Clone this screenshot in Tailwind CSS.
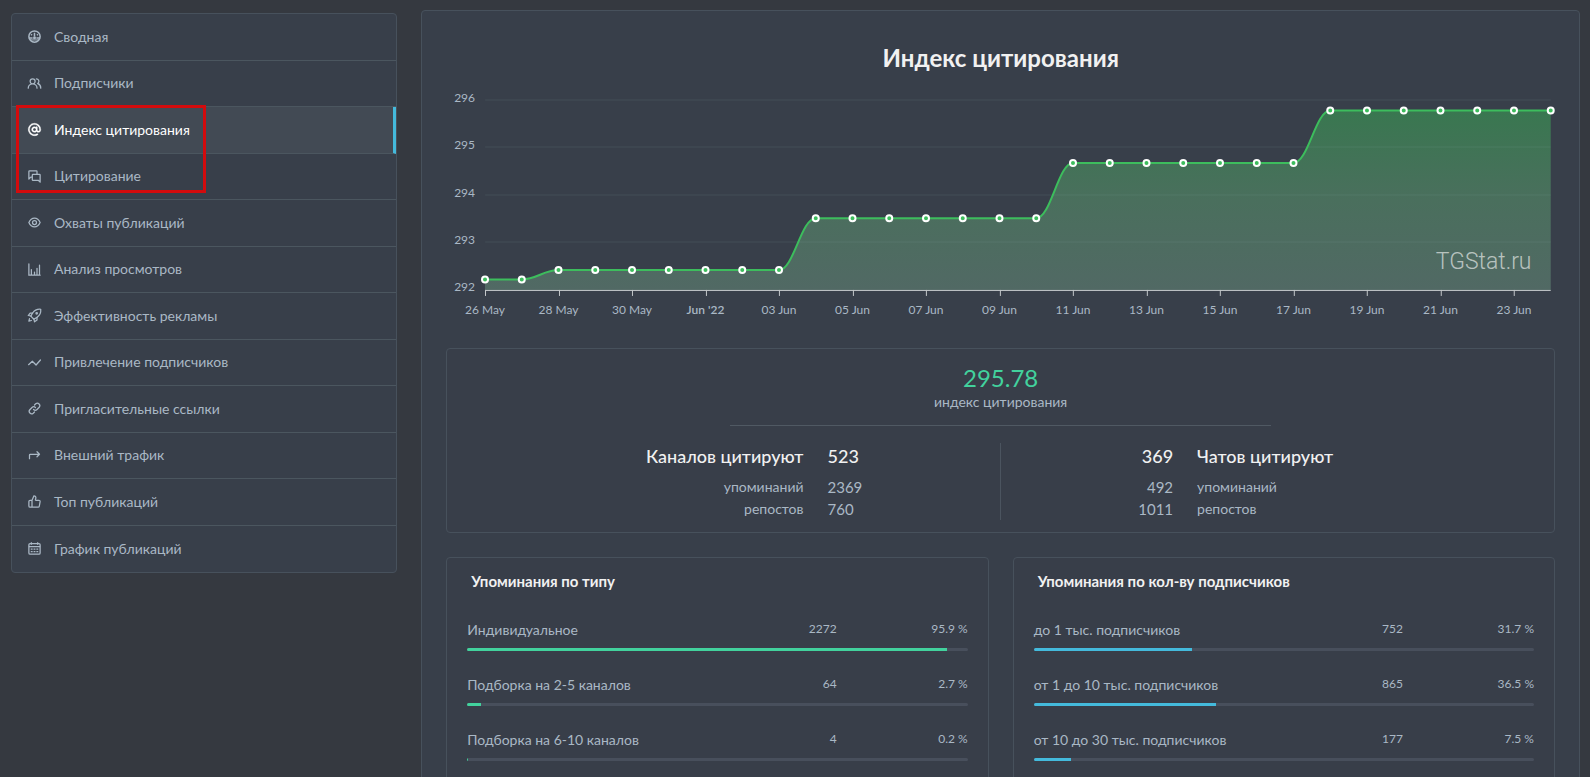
<!DOCTYPE html>
<html lang="ru">
<head>
<meta charset="utf-8">
<meta name="viewport" content="width=device-width, initial-scale=1">
<title>Индекс цитирования</title>
<script src="https://cdn.jsdelivr.net/npm/@tailwindcss/browser@4"></script>
</head>
<body class="min-h-screen bg-[#353940] font-['Lato','Open_Sans',sans-serif] text-sm text-[#aab8c5]">
<div class="grid grid-cols-[1fr_3fr] items-start gap-6 pt-[10px] pr-[10px] pl-[11px]">

  <div class="relative mt-[3px]">
  <nav class="grid min-h-[560px] auto-rows-fr divide-y divide-[#4b565f] rounded border border-[#47515c] bg-[#383f4a]" aria-label="Статистика">
    <a href="#" class="flex items-center gap-3 px-[15px]"><svg class="size-[15px]" viewBox="0 0 24 24" fill="none" stroke="currentColor" stroke-width="2.400"><circle cx="12" cy="12" r="9"/><path d="M3 14.500h6M15 14.500h6M12 6v6M6.500 8.500l1.500 1.500M17.500 8.500 16 10"/><path d="M5 17.500h14" stroke-width="1.600"/><circle cx="12" cy="14" r="2.400" fill="currentColor" stroke="none"/></svg>Сводная</a>
    <a href="#" class="flex items-center gap-3 px-[15px]"><svg class="size-[15px]" viewBox="0 0 24 24" fill="currentColor"><path d="M12.300 12.220A4.920 4.920 0 0 0 14 8.500a5 5 0 0 0-10 0 4.920 4.920 0 0 0 1.700 3.720A8 8 0 0 0 1 19.500a1 1 0 0 0 2 0 6 6 0 0 1 12 0 1 1 0 0 0 2 0 8 8 0 0 0-4.700-7.280ZM9 11.500a3 3 0 1 1 3-3 3 3 0 0 1-3 3Zm9.740.320A5 5 0 0 0 15 3.500a1 1 0 0 0 0 2 3 3 0 0 1 3 3 3 3 0 0 1-1.500 2.590 1 1 0 0 0-.5.840 1 1 0 0 0 .450.860l.390.260.130.070a7 7 0 0 1 4 6.380 1 1 0 0 0 2 0 9 9 0 0 0-4.230-8.180Z"/></svg>Подписчики</a>
    <a href="#" aria-current="page" class="flex items-center gap-3 border-r-[3px] border-r-[#44badc] bg-[#424a54] px-[15px] text-white"><svg class="size-[15px]" viewBox="0 0 24 24" fill="currentColor" stroke="currentColor" stroke-width=".6"><path d="M12 2a10 10 0 1 0 5 18.660 1 1 0 1 0-1-1.730A8 8 0 1 1 20 12v.750a1.750 1.750 0 0 1-3.500 0V8.500a1 1 0 0 0-2-.210A4.450 4.450 0 0 0 12 7.500a4.500 4.500 0 1 0 3.300 7.500A3.740 3.740 0 0 0 22 12.750V12A10 10 0 0 0 12 2Zm0 12.500a2.500 2.500 0 1 1 2.500-2.500 2.500 2.500 0 0 1-2.500 2.500Z"/></svg>Индекс цитирования</a>
    <a href="#" class="flex items-center gap-3 px-[15px]"><svg class="size-[15px]" viewBox="0 0 24 24" fill="none" stroke="currentColor" stroke-width="2" stroke-linejoin="round"><path d="M8.500 13H6l-3 3V4a1 1 0 0 1 1-1h11a1 1 0 0 1 1 1v4"/><path d="M9.500 8.500H20a1 1 0 0 1 1 1V21l-3-3H9.500a1 1 0 0 1-1-1V9.500a1 1 0 0 1 1-1Z"/></svg>Цитирование</a>
    <a href="#" class="flex items-center gap-3 px-[15px]"><svg class="size-[15px]" viewBox="0 0 24 24" fill="none" stroke="currentColor" stroke-width="2"><path d="M3 12c2-4.600 5.200-7 9-7s7 2.400 9 7c-2 4.600-5.200 7-9 7s-7-2.400-9-7Z"/><circle cx="12" cy="12" r="3.200"/></svg>Охваты публикаций</a>
    <a href="#" class="flex items-center gap-3 px-[15px]"><svg class="size-[15px]" viewBox="0 0 24 24" fill="none" stroke="currentColor" stroke-width="2" stroke-linecap="round"><path d="M3 3v18h18M7 20v-8M12 20v-4M16 20V10M20 20V5"/></svg>Анализ просмотров</a>
    <a href="#" class="flex items-center gap-3 px-[15px]"><svg class="size-[15px]" viewBox="0 0 24 24" fill="none" stroke="currentColor" stroke-width="2" stroke-linejoin="round" stroke-linecap="round"><path d="M22 2c-6-.5-10 1.500-13 6l-3 5 5 5 5-3c4.500-3 6.500-7 6-13Z"/><path d="M9 8 5 8l-3 4 5 1M16 15v4l-4 3-1-5M4 17l-1 4 4-1"/><circle cx="15.500" cy="8.500" r="1.200"/></svg>Эффективность рекламы</a>
    <a href="#" class="flex items-center gap-3 px-[15px]"><svg class="size-[15px]" viewBox="0 0 24 24" fill="none" stroke="currentColor" stroke-width="2" stroke-linejoin="round" stroke-linecap="round"><path d="m2.500 15.500 6-5.500 6 6 7-8"/></svg>Привлечение подписчиков</a>
    <a href="#" class="flex items-center gap-3 px-[15px]"><svg class="size-[15px]" viewBox="0 0 24 24" fill="none" stroke="currentColor" stroke-width="2" stroke-linecap="round"><path d="m12 17.500-2 2a3.900 3.900 0 0 1-5.500-5.500l3.500-3.500a3.900 3.900 0 0 1 5.500 0M12 6.500l2-2a3.900 3.900 0 0 1 5.500 5.500L16 13.500a3.900 3.900 0 0 1-5.500 0"/></svg>Пригласительные ссылки</a>
    <a href="#" class="flex items-center gap-3 px-[15px]"><svg class="size-[15px]" viewBox="0 0 24 24" fill="none" stroke="currentColor" stroke-width="2" stroke-linejoin="round" stroke-linecap="round"><path d="M4 17v-6a1 1 0 0 1 1-1h15M16 6l4 4-4 4"/></svg>Внешний трафик</a>
    <a href="#" class="flex items-center gap-3 px-[15px]"><svg class="size-[15px]" viewBox="0 0 24 24" fill="currentColor"><path d="M21.300 10.080A3 3 0 0 0 19 9h-4.560L15 7.570A4.130 4.130 0 0 0 11.110 2a1 1 0 0 0-.910.590L7.350 9H5a3 3 0 0 0-3 3v7a3 3 0 0 0 3 3h12.730a3 3 0 0 0 2.950-2.460l1.270-7a3 3 0 0 0-.650-2.460ZM7 20H5a1 1 0 0 1-1-1v-7a1 1 0 0 1 1-1h2Zm13-7.820-1.270 7a1 1 0 0 1-1 .820H9v-9.790l2.720-6.120a2.110 2.110 0 0 1 1.380 2.780l-.530 1.430A2 2 0 0 0 14.440 11H19a1 1 0 0 1 1 1.180Z"/></svg>Топ публикаций</a>
    <a href="#" class="flex items-center gap-3 px-[15px]"><svg class="size-[15px]" viewBox="0 0 24 24" fill="none" stroke="currentColor" stroke-width="2"><rect x="3" y="4" width="18" height="17" rx="2"/><path d="M3 9h18M7 2v4M17 2v4M6 13h3M10.500 13h3M15 13h3M6 17h3M10.500 17h3M15 17h3"/></svg>График публикаций</a>
  </nav>
  <div class="pointer-events-none absolute top-[92px] left-[5px] h-[88px] w-[190px] border-[3px] border-[#d30b0d]"></div>
  </div>

  <main class="rounded border border-[#47515c] bg-[#383f4a] px-6 pt-[29px] pb-12">
    <h1 class="text-center text-2xl leading-9 font-bold text-[#f1f1f1]">Индекс цитирования</h1>
    <svg id="chart" class="mt-3 block h-auto w-full overflow-visible" viewBox="0 0 1109 241" role="img" aria-label="Индекс цитирования по дням">
      <defs><linearGradient id="fill" x1="0" y1="0" x2="0" y2="1"><stop offset="0" stop-color="#397750"/><stop offset=".5" stop-color="#4a6f5d"/><stop offset="1" stop-color="#516964"/></linearGradient></defs>
      <path id="area" fill="url(#fill)"/>
      <g id="grid" stroke="#a0b4be" stroke-opacity=".06" stroke-width="2"></g>
      <g id="axis" stroke="#c4c8cb"></g>
      <g id="labels" class="fill-[#aab8c5] text-xs"></g>
      <path id="line" fill="none" stroke="#3dbd5d" stroke-width="2"/>
      <g id="dots" fill="#3dbd5d" stroke="#fff" stroke-width="2"></g>
      <text x="990" y="181" class="fill-white/60 font-['Roboto',sans-serif] text-[23px] font-light">TGStat.ru</text>
    </svg>

    <section class="mt-[19px] rounded border border-[#47515c] bg-[#383e49] px-3 pt-[15px] pb-3">
      <p class="text-center text-2xl leading-7 text-[#42d29d]">295.78</p>
      <p class="text-center leading-[19px]">индекс цитирования</p>
      <hr class="mx-auto mt-[14px] w-1/2 border-[#505963]">
      <div class="mt-[17px] grid grid-cols-2">
        <dl class="grid grid-cols-[2fr_1fr] gap-x-6 border-r border-[#4b545f] leading-[22px]">
          <dt class="pb-[6px] text-right text-lg leading-[27px] font-medium text-[#f1f1f1]">Каналов цитируют</dt><dd class="text-lg leading-[27px] font-medium text-[#f1f1f1]">523</dd>
          <dt class="text-right">упоминаний</dt><dd class="text-[15px]">2369</dd>
          <dt class="text-right">репостов</dt><dd class="text-[15px]">760</dd>
        </dl>
        <dl class="grid grid-cols-[1fr_2fr] gap-x-6 leading-[22px]">
          <dd class="pb-[6px] text-right text-lg leading-[27px] font-medium text-[#f1f1f1]">369</dd><dt class="text-lg leading-[27px] font-medium text-[#f1f1f1]">Чатов цитируют</dt>
          <dd class="text-right text-[15px]">492</dd><dt>упоминаний</dt>
          <dd class="text-right text-[15px]">1011</dd><dt>репостов</dt>
        </dl>
      </div>
    </section>

    <div class="mt-6 grid grid-cols-2 gap-6">
      <section class="rounded border border-[#47515c] bg-[#383e49] px-5 pt-[11px] pb-6">
        <h2 class="pl-1 text-[15px] leading-6 font-bold text-[#f1f1f1]">Упоминания по типу</h2>
        <table class="mt-[17px] w-full table-fixed">
          <colgroup><col class="w-1/2"><col><col class="w-[131px]"></colgroup>
          <tbody>
            <tr><td class="h-[38px] pt-[3px]">Индивидуальное</td><td class="text-right text-xs">2272</td><td class="text-right text-xs">95.9 %</td></tr>
            <tr><td colspan="3" class="pb-[14px]"><div class="h-[3px] overflow-hidden rounded-xs bg-[#484f5c]"><div class="h-full bg-[#42d29d]" style="width:95.9%"></div></div></td></tr>
            <tr><td class="h-[38px] pt-[3px]">Подборка на 2-5 каналов</td><td class="text-right text-xs">64</td><td class="text-right text-xs">2.7 %</td></tr>
            <tr><td colspan="3" class="pb-[14px]"><div class="h-[3px] overflow-hidden rounded-xs bg-[#484f5c]"><div class="h-full bg-[#42d29d]" style="width:2.7%"></div></div></td></tr>
            <tr><td class="h-[38px] pt-[3px]">Подборка на 6-10 каналов</td><td class="text-right text-xs">4</td><td class="text-right text-xs">0.2 %</td></tr>
            <tr><td colspan="3" class="pb-[14px]"><div class="h-[3px] overflow-hidden rounded-xs bg-[#484f5c]"><div class="h-full bg-[#42d29d]" style="width:0.2%"></div></div></td></tr>
          </tbody>
        </table>
      </section>
      <section class="rounded border border-[#47515c] bg-[#383e49] px-5 pt-[11px] pb-6">
        <h2 class="pl-1 text-[15px] leading-6 font-bold text-[#f1f1f1]">Упоминания по кол-ву подписчиков</h2>
        <table class="mt-[17px] w-full table-fixed">
          <colgroup><col class="w-1/2"><col><col class="w-[131px]"></colgroup>
          <tbody>
            <tr><td class="h-[38px] pt-[3px]">до 1 тыс. подписчиков</td><td class="text-right text-xs">752</td><td class="text-right text-xs">31.7 %</td></tr>
            <tr><td colspan="3" class="pb-[14px]"><div class="h-[3px] overflow-hidden rounded-xs bg-[#484f5c]"><div class="h-full bg-[#44badc]" style="width:31.7%"></div></div></td></tr>
            <tr><td class="h-[38px] pt-[3px]">от 1 до 10 тыс. подписчиков</td><td class="text-right text-xs">865</td><td class="text-right text-xs">36.5 %</td></tr>
            <tr><td colspan="3" class="pb-[14px]"><div class="h-[3px] overflow-hidden rounded-xs bg-[#484f5c]"><div class="h-full bg-[#44badc]" style="width:36.5%"></div></div></td></tr>
            <tr><td class="h-[38px] pt-[3px]">от 10 до 30 тыс. подписчиков</td><td class="text-right text-xs">177</td><td class="text-right text-xs">7.5 %</td></tr>
            <tr><td colspan="3" class="pb-[14px]"><div class="h-[3px] overflow-hidden rounded-xs bg-[#484f5c]"><div class="h-full bg-[#44badc]" style="width:7.5%"></div></div></td></tr>
          </tbody>
        </table>
      </section>
    </div>
  </main>
</div>
<script>
  // Daily citation index, 26 May to 24 June
  const values = [292.2, 292.2, ...Array(7).fill(292.4), ...Array(7).fill(293.5), ...Array(7).fill(294.67), ...Array(7).fill(295.78)];
  const days = ['26 May', '28 May', '30 May', "Jun '22", '03 Jun', '05 Jun', '07 Jun', '09 Jun', '11 Jun', '13 Jun', '15 Jun', '17 Jun', '19 Jun', '21 Jun', '23 Jun'];
  const left = 39, right = 1105, zero = 201, bottom = 202, unit = 47.2;
  const step = (right - left) / (values.length - 1);
  const x = i => left + i * step;
  const y = v => zero - (v - 292) * unit;
  const set = (id, html) => { document.getElementById(id).innerHTML = html; };

  let d = `M${x(0)} ${y(values[0])}`;
  for (let i = 1; i < values.length; i++) {
    d += `C${x(i - 0.6)} ${y(values[i - 1])} ${x(i - 0.4)} ${y(values[i])} ${x(i)} ${y(values[i])}`;
  }
  document.getElementById('line').setAttribute('d', d);
  document.getElementById('area').setAttribute('d', `${d}V${bottom}H${left}Z`);
  set('dots', values.map((v, i) => `<circle cx="${x(i)}" cy="${y(v)}" r="3"/>`).join(''));
  set('grid', [293, 294, 295, 296].map(v => `<path d="M${left} ${Math.round(y(v))}H${right}"/>`).join(''));
  set('axis', `<path d="M${left} ${bottom + .5}H${right}"/>` + days.map((_, k) => `<path d="M${Math.round(x(2 * k)) + .5} ${bottom}v6"/>`).join(''));
  set('labels',
    [292, 293, 294, 295, 296].map(v => `<text x="29" y="${Math.round(y(v)) + 2}" text-anchor="end">${v}</text>`).join('') +
    days.map((t, k) => `<text x="${x(2 * k)}" y="226" text-anchor="middle"${k === 3 ? ' class="font-semibold"' : ''}>${t}</text>`).join(''));
</script>
</body>
</html>
